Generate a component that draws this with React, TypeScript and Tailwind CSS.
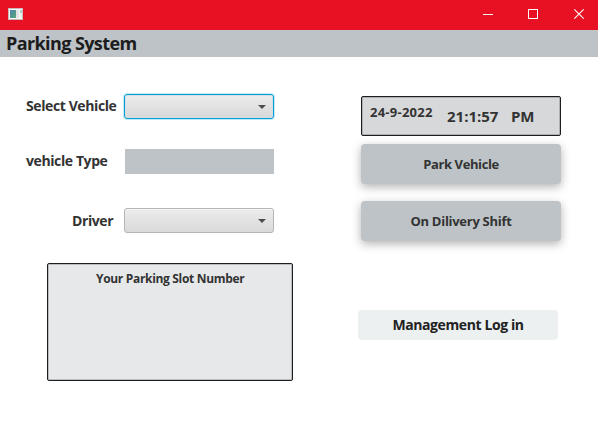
function AppIcon() {
  return (
    <svg width="15" height="12" viewBox="0 0 15 12" shapeRendering="crispEdges">
      <defs>
        <linearGradient id="pane" x1="0" y1="0" x2="1" y2="1">
          <stop offset="0" stopColor="#4f86ad" />
          <stop offset="1" stopColor="#58a878" />
        </linearGradient>
      </defs>
      <rect width="15" height="12" fill="#c9b9ba" />
      <rect x="1" y="1" width="13" height="10" fill="#f7f7f7" />
      <rect x="2" y="2" width="6" height="8" fill="url(#pane)" />
      <rect x="8" y="2" width="3" height="8" fill="#e4e4e4" />
      <rect x="12" y="2" width="2" height="3" fill="#a9cfc6" />
      <rect x="12" y="5" width="2" height="5" fill="#eeeeee" />
    </svg>
  );
}

function TitleBar() {
  return (
    <div className="flex h-[30px] items-center bg-[#e81123] pl-2">
      <div className="-mt-[2px]"><AppIcon /></div>
      <div className="ml-auto flex">
        <svg width="138" height="30" viewBox="0 0 138 30" fill="none" stroke="#fff">
          <path d="M23 14.5h10" shapeRendering="crispEdges" />
          <rect x="68.5" y="9.5" width="9" height="9" shapeRendering="crispEdges" />
          <path d="M114.3 9.3l9.4 9.4M123.7 9.3l-9.4 9.4" strokeWidth="1.1" />
        </svg>
      </div>
    </div>
  );
}

function ComboBox({ focused = false }: { focused?: boolean }) {
  return (
    <div
      className={
        "flex h-[25px] w-[150px] items-center justify-end rounded-[3px] border bg-linear-to-b pr-[7px] " +
        (focused
          ? "border-[#039ed3] from-[#ededed] to-[#d8d8d8] shadow-[0_0_0_1px_#c4e9f6,inset_0_0_0_1px_#d3dfe4]"
          : "border-[#b5b5b5] from-[#ececec] to-[#dadada] shadow-[inset_0_1px_0_#f6f6f6]")
      }
    >
      <svg width="8" height="4" viewBox="0 0 8 4">
        <path d="M0 0h8L4 4z" fill="#4d4d4d" />
      </svg>
    </div>
  );
}

const label = "text-[14px] leading-5 whitespace-nowrap tracking-[-0.4px]";

export default function App() {
  return (
    <div className="h-[426px] w-[598px] overflow-hidden bg-white font-['Open_Sans','Noto_Sans',sans-serif] font-bold text-[#333]">
      <TitleBar />
      <header className="h-[27px] bg-[#bdc3c7] pl-[6px] text-[18px] leading-[27px] text-[#1c1c1c]">
        <span className="tracking-[-0.6px]">Parking System</span>
      </header>
      <main className="flex">
        <section className="w-[293px] pt-[37px]">
          <div className="flex h-[25px] items-center">
            <div className={label + " w-[124px] pb-px pl-[26px]"}>Select Vehicle</div>
            <ComboBox focused />
          </div>
          <div className="mt-[30px] flex h-[25px] items-center">
            <div className={label + " w-[125px] pb-px pl-[26px]"}>vehicle Type</div>
            <div className="h-[25px] w-[149px] bg-[#bdc3c7]" />
          </div>
          <div className="mt-[34px] flex h-[25px] items-center">
            <div className={label + " w-[124px] pl-[72px]"}>Driver</div>
            <ComboBox />
          </div>
          <div className="mt-[30px] ml-[47px] h-[118px] w-[246px] rounded-[2px] border border-[#1d1e20] bg-[#e7e8ea] pt-[7px] pl-12 text-[12px] leading-4 shadow-[inset_0_0_0_1px_#bcbdbf]">
            <span className="tracking-[-0.32px]">Your Parking Slot Number</span>
          </div>
        </section>
        <section className="ml-[68px] w-[200px] pt-[39px]">
          <div className="flex h-10 rounded-[2px] border border-[#1d1e20] bg-[#d7d8da] pl-2 whitespace-nowrap shadow-[inset_0_0_0_1px_#aeafb1]">
            <div className="w-[77px] pt-[5px] text-[13px] leading-5 tracking-[0.25px]">24-9-2022</div>
            <div className="w-[64px] pt-[8px] text-[15px] leading-[22px]">21:1:57</div>
            <div className="pt-[8px] text-[15px] leading-[22px] tracking-[-0.2px]">PM</div>
          </div>
          <button className="mt-2 block h-10 w-[200px] rounded-[4px] bg-[#bdc3c7] pt-[2px] text-[13px] tracking-[-0.4px] shadow-[0_3px_10px_rgba(0,0,0,0.3)]">Park Vehicle</button>
          <button className="mt-[17px] block h-10 w-[200px] rounded-[4px] bg-[#bdc3c7] pt-[2px] text-[13px] tracking-[-0.28px] shadow-[0_3px_10px_rgba(0,0,0,0.3)]">On Dilivery Shift</button>
          <button className="mt-[69px] -ml-[3px] block h-[30px] w-[200px] rounded-[4px] bg-[#ecf0f1] pb-px text-[14px] tracking-[-0.4px] text-[#222]">Management Log in</button>
        </section>
      </main>
    </div>
  );
}
